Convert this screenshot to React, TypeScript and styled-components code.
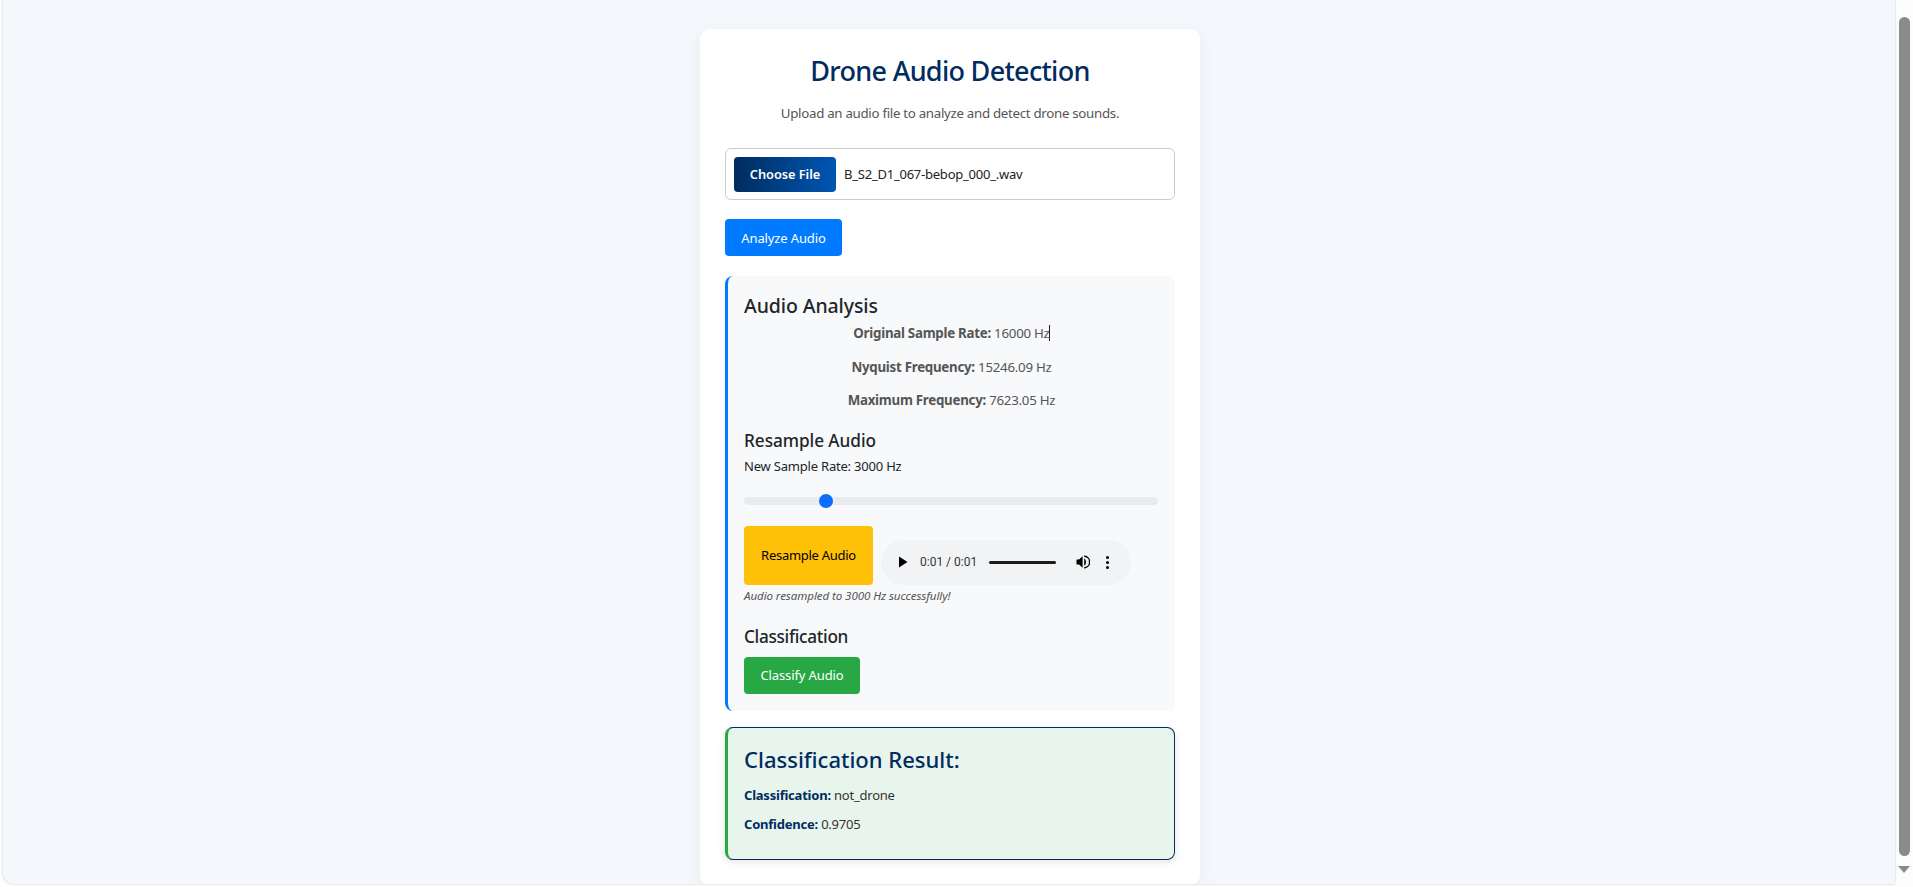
import styled, { createGlobalStyle } from "styled-components";

const GlobalStyle = createGlobalStyle`
  html, body {
    margin: 0;
    height: 887px;
    overflow: hidden;
    background: #ffffff;
  }
  body {
    font-family: "Noto Sans", "Open Sans", sans-serif;
  }
  * {
    box-sizing: border-box;
  }
`;

const App = () => {
  return (
    <Frame>
      <GlobalStyle />
      <Page>
        <Card>
          <Title>Drone Audio Detection</Title>
          <Subtitle>Upload an audio file to analyze and detect drone sounds.</Subtitle>

          <FileField>
            <ChooseButton>Choose File</ChooseButton>
            <FileName>B_S2_D1_067-bebop_000_.wav</FileName>
          </FileField>

          <AnalyzeButton>Analyze Audio</AnalyzeButton>

          <AnalysisPanel>
            <PanelTitle>Audio Analysis</PanelTitle>
            <StatLine>
              <strong>Original Sample Rate:</strong> 16000 Hz<Caret />
            </StatLine>
            <StatLine>
              <strong>Nyquist Frequency:</strong> 15246.09 Hz
            </StatLine>
            <StatLine>
              <strong>Maximum Frequency:</strong> 7623.05 Hz
            </StatLine>

            <SectionTitle>Resample Audio</SectionTitle>
            <RateLabel>New Sample Rate: 3000 Hz</RateLabel>
            <RateSlider type="range" min={0} max={16000} defaultValue={3000} />

            <ResampleRow>
              <ResampleButton>Resample Audio</ResampleButton>
              <AudioPlayer>
                <svg width="10" height="12" viewBox="0 0 10 12">
                  <path d="M1 0.5 L9.5 6 L1 11.5 Z" fill="#000" />
                </svg>
                <AudioTime>0:01 / 0:01</AudioTime>
                <AudioProgress />
                <svg width="14" height="14" viewBox="0 0 14 14">
                  <path
                    d="M0.5 4.6 H3 L6.6 1.2 V12.8 L3 9.4 H0.5 Z M8.2 3.4 C10.6 4.4 10.6 9.6 8.2 10.6 Z"
                    fill="#000"
                  />
                  <path
                    d="M8.2 1 C12.6 2 13.8 5 13.4 7 C13.8 9 12.6 12 8.2 13"
                    fill="none"
                    stroke="#000"
                    strokeWidth="1.3"
                  />
                </svg>
                <MenuDots>
                  <i />
                  <i />
                  <i />
                </MenuDots>
              </AudioPlayer>
            </ResampleRow>
            <SuccessNote>Audio resampled to 3000 Hz successfully!</SuccessNote>

            <ClassifyTitle>Classification</ClassifyTitle>
            <ClassifyButton>Classify Audio</ClassifyButton>
          </AnalysisPanel>

          <ResultPanel>
            <ResultTitle>Classification Result:</ResultTitle>
            <ResultLine>
              <strong>Classification:</strong> not_drone
            </ResultLine>
            <ResultLine>
              <strong>Confidence:</strong> 0.9705
            </ResultLine>
          </ResultPanel>
        </Card>
      </Page>

      <ScrollTrack>
        <ScrollThumb />
        <ScrollArrow />
      </ScrollTrack>
    </Frame>
  );
};

export default App;

const Frame = styled.div`
  display: flex;
  width: 1913px;
  height: 887px;
  overflow: hidden;
  background: #fdfdfd;
`;

const Page = styled.main`
  width: 1892px;
  height: 884px;
  margin-left: 3px;
  padding: 29px 0 0 2px;
  background: #f4f7fb;
  border-bottom-left-radius: 10px;
  box-shadow: 0 0 2px rgba(0, 0, 0, 0.25);
  display: flex;
  justify-content: center;
  align-items: flex-start;
  overflow: hidden;
`;

const Card = styled.div`
  width: 500px;
  height: 856px;
  padding: 0 25px;
  background: #ffffff;
  border-radius: 10px;
  box-shadow: 0 4px 20px rgba(0, 0, 0, 0.05);
`;

const Title = styled.h1`
  margin: 0;
  padding-top: 22px;
  font-size: 27px;
  letter-spacing: -0.7px;
  line-height: 40px;
  font-weight: 500;
  text-align: center;
  color: #002c5f;
`;

const Subtitle = styled.p`
  margin: 12px 0 0;
  font-size: 13.3px;
  letter-spacing: -0.3px;
  line-height: 20px;
  text-align: center;
  color: #555555;
`;

const FileField = styled.div`
  display: flex;
  align-items: center;
  gap: 8px;
  height: 52px;
  margin-top: 25px;
  padding: 0 8px;
  background: #ffffff;
  border: 1px solid #cccccc;
  border-radius: 6px;
`;

const ChooseButton = styled.span`
  width: 102px;
  height: 35px;
  display: flex;
  align-items: center;
  justify-content: center;
  font-size: 12.8px;
  letter-spacing: -0.05px;
  font-weight: 600;
  color: #ffffff;
  background: linear-gradient(90deg, #002c5f, #0056b3);
  border-radius: 4px;
`;

const FileName = styled.span`
  font-size: 13px;
  letter-spacing: -0.23px;
  color: #222222;
`;

const Button = styled.button`
  display: block;
  border: none;
  border-radius: 4px;
  font-family: inherit;
  font-size: 13px;
  letter-spacing: -0.12px;
  padding: 0;
`;

const AnalyzeButton = styled(Button)`
  width: 117px;
  height: 37px;
  margin-top: 19px;
  background: #007bff;
  color: #ffffff;
`;

const AnalysisPanel = styled.section`
  height: 435px;
  margin-top: 20px;
  padding: 16px 16px 0 16px;
  background: #f8f9fa;
  border-left: 3px solid #007bff;
  border-radius: 8px;
`;

const PanelTitle = styled.h2`
  margin: 2px 0 3px;
  font-size: 19.5px;
  letter-spacing: -0.1px;
  line-height: 24px;
  font-weight: 500;
  color: #212529;
`;

const StatLine = styled.p`
  margin: 0;
  height: 33.5px;
  padding-top: 2px;
  font-size: 13.3px;
  letter-spacing: -0.26px;
  line-height: 20px;
  text-align: center;
  color: #555555;

  strong {
    font-weight: 700;
  }
`;

const Caret = styled.span`
  display: inline-block;
  width: 1px;
  height: 16px;
  margin-left: -1px;
  vertical-align: -3px;
  background: #222222;
`;

const SectionTitle = styled.h3`
  margin: 7px 0 0;
  font-size: 17.2px;
  letter-spacing: -0.05px;
  line-height: 24px;
  font-weight: 500;
  color: #212529;
`;

const RateLabel = styled.div`
  margin-top: 3px;
  font-size: 13px;
  letter-spacing: -0.2px;
  line-height: 20px;
  color: #212529;
`;

const RateSlider = styled.input`
  display: block;
  appearance: none;
  width: 414px;
  height: 8px;
  margin: 21px 0 0;
  background: #e9ecef;
  border-radius: 4px;
  outline: none;

  &::-webkit-slider-thumb {
    appearance: none;
    width: 14px;
    height: 14px;
    border-radius: 50%;
    background: #0d6efd;
  }
`;

const ResampleRow = styled.div`
  display: flex;
  align-items: flex-end;
  gap: 8px;
  margin-top: 21px;
`;

const ResampleButton = styled(Button)`
  width: 129px;
  height: 59px;
  letter-spacing: -0.28px;
  background: #ffc107;
  color: #000000;
`;

const AudioPlayer = styled.div`
  display: flex;
  align-items: center;
  width: 250px;
  height: 45px;
  padding: 0 17px 0 17px;
  background: #f1f3f4;
  border-radius: 23px;
`;

const AudioTime = styled.span`
  margin-left: 12px;
  font-family: "Roboto", sans-serif;
  font-size: 12px;
  color: #333333;
  white-space: nowrap;
`;

const AudioProgress = styled.div`
  width: 67px;
  height: 3px;
  margin: 0 20px 0 12px;
  background: #1b1b1b;
  border-radius: 2px;
`;

const MenuDots = styled.div`
  display: flex;
  flex-direction: column;
  gap: 2px;
  margin-left: 16px;

  i {
    display: block;
    width: 3px;
    height: 3px;
    border-radius: 50%;
    background: #000000;
  }
`;

const SuccessNote = styled.p`
  margin: 3px 0 0;
  font-size: 11.6px;
  letter-spacing: -0.1px;
  line-height: 16px;
  font-style: italic;
  color: #555555;
`;

const ClassifyTitle = styled(SectionTitle)`
  margin-top: 21px;
  letter-spacing: -0.3px;
`;

const ClassifyButton = styled(Button)`
  width: 116px;
  height: 37px;
  margin-top: 8px;
  background: #28a745;
  color: #ffffff;
`;

const ResultPanel = styled.section`
  height: 133px;
  margin-top: 16px;
  padding: 16px;
  background: #e8f5ec;
  border: 1px solid #002c5f;
  border-left: 3px solid #28a745;
  border-radius: 8px;
  box-shadow: 0 2px 8px rgba(0, 0, 0, 0.1);
`;

const ResultTitle = styled.h3`
  margin: 0 0 12px;
  padding-top: 1px;
  font-size: 22px;
  line-height: 28px;
  font-weight: 500;
  color: #002c5f;
`;

const ResultLine = styled.p`
  margin: 0 0 9px;
  font-size: 13px;
  letter-spacing: -0.22px;
  line-height: 20px;
  color: #333333;

  strong {
    color: #002c5f;
  }
`;

const ScrollTrack = styled.aside`
  position: relative;
  flex: 1;
  height: 887px;
`;

const ScrollThumb = styled.div`
  position: absolute;
  top: 17px;
  left: 4px;
  width: 11px;
  height: 839px;
  border-radius: 6px;
  background: #8b8b8b;
`;

const ScrollArrow = styled.div`
  position: absolute;
  top: 866px;
  left: 3px;
  width: 0;
  height: 0;
  border-left: 6.5px solid transparent;
  border-right: 6.5px solid transparent;
  border-top: 7px solid #8b8b8b;
`;
